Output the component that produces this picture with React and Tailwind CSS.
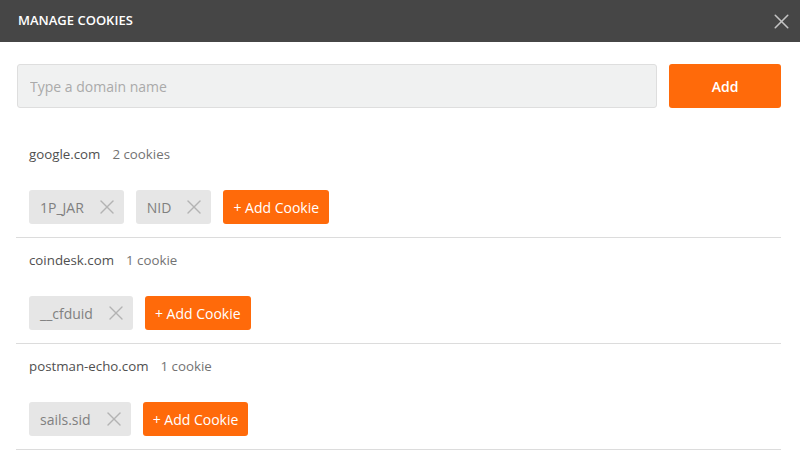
import React from "react";
import { X } from "lucide-react";

const domains = [
    { name: "google.com", count: "2 cookies", cookies: ["1P_JAR", "NID"] },
    { name: "coindesk.com", count: "1 cookie", cookies: ["__cfduid"] },
    { name: "postman-echo.com", count: "1 cookie", cookies: ["sails.sid"] },
];

function CookieChip({ name }) {
    return (
        <div className="flex items-center h-[34px] pl-[11px] pr-[5px] bg-[#e6e6e6] rounded-[3px] text-[14px] text-[#808080]">
            <span>{name}</span>
            <X size={24} strokeWidth={1.4} className="ml-[11px] text-[#b3b3b3]" />
        </div>
    );
}

export default function App() {
    return (
        <div
            className="w-[800px] h-[461px] bg-white overflow-hidden"
            style={{ fontFamily: '"Open Sans", "Noto Sans", sans-serif' }}
        >
            {/* header */}
            <div className="h-[42px] bg-[#464646] flex items-center justify-between pl-[18px] pr-[6px]">
                <span className="text-white text-[13px] font-semibold">MANAGE COOKIES</span>
                <X size={25} strokeWidth={1.5} className="text-[#c4c4c4]" />
            </div>

            <div className="pl-[17px] pr-[19px] pt-[22px]">
                {/* domain input */}
                <div className="flex gap-3">
                    <input
                        className="flex-1 h-[44px] bg-[#f0f1f1] border border-[#dedede] rounded-[3px] px-3 text-[14px] placeholder:text-[#aaaaaa] outline-none"
                        placeholder="Type a domain name"
                    />
                    <button className="w-[112px] h-[44px] bg-[#ff6a0a] text-white text-[14px] font-semibold rounded-[3px]">
                        Add
                    </button>
                </div>

                {/* domain list */}
                <div className="mt-[24px] -ml-px">
                    {domains.map((d, i) => (
                        <div key={i} className="border-b border-[#dcdcdc] pt-[13px] pb-[13px] px-[13px]">
                            <div className="h-[20px] flex items-center text-[13.3px]">
                                <span className="text-[#505050]">{d.name}</span>
                                <span className="ml-[12px] text-[#737373]">{d.count}</span>
                            </div>
                            <div className="mt-[25px] flex gap-3">
                                {d.cookies.map((c, j) => (
                                    <CookieChip key={j} name={c} />
                                ))}
                                <button className="h-[34px] px-[10px] bg-[#ff6a0a] text-white text-[14px] font-medium rounded-[3px]">
                                    + Add Cookie
                                </button>
                            </div>
                        </div>
                    ))}
                </div>
            </div>
        </div>
    );
}
